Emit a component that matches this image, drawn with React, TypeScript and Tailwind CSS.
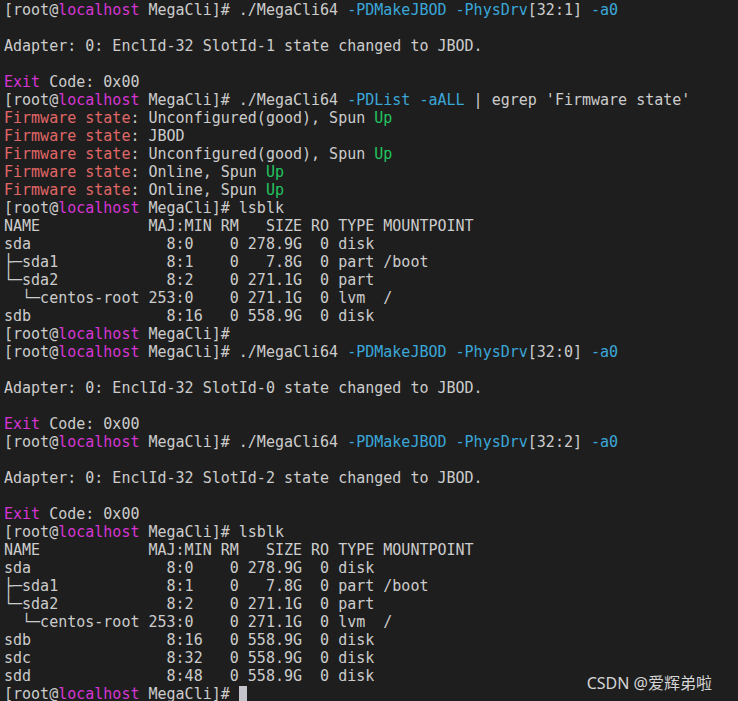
type Seg = [string, string?];

const G = 'text-[#cccccc]';
const PINK = 'text-[#d535d3]';
const BLUE = 'text-[#3ba7d9]';
const RED = 'text-[#e06767]';
const GREEN = 'text-[#23c45f]';

const prompt = (cmd: Seg[] = []): Seg[] => [
  ['[root@'],
  ['localhost', PINK],
  [' MegaCli]#'],
  ...(cmd.length ? ([[' ']] as Seg[]) : []),
  ...cmd,
];

const makeJbod = (slot: string): Seg[] =>
  prompt([
    ['./MegaCli64'],
    [' -PDMakeJBOD -PhysDrv', BLUE],
    [`[32:${slot}]`],
    [' -a0', BLUE],
  ]);

const exit: Seg[] = [['Exit', PINK], [' Code: 0x00']];
const fw = (rest: Seg[]): Seg[] => [['Firmware state', RED], [': '], ...rest];

const lines: Seg[][] = [
  makeJbod('1'),
  [],
  [['Adapter: 0: EnclId-32 SlotId-1 state changed to JBOD.']],
  [],
  exit,
  prompt([['./MegaCli64'], [' -PDList -aALL', BLUE], [" | egrep 'Firmware state'"]]),
  fw([['Unconfigured(good), Spun '], ['Up', GREEN]]),
  fw([['JBOD']]),
  fw([['Unconfigured(good), Spun '], ['Up', GREEN]]),
  fw([['Online, Spun '], ['Up', GREEN]]),
  fw([['Online, Spun '], ['Up', GREEN]]),
  prompt([['lsblk']]),
  [['NAME            MAJ:MIN RM   SIZE RO TYPE MOUNTPOINT']],
  [['sda               8:0    0 278.9G  0 disk']],
  [['├─sda1            8:1    0   7.8G  0 part /boot']],
  [['└─sda2            8:2    0 271.1G  0 part']],
  [['  └─centos-root 253:0    0 271.1G  0 lvm  /']],
  [['sdb               8:16   0 558.9G  0 disk']],
  prompt(),
  makeJbod('0'),
  [],
  [['Adapter: 0: EnclId-32 SlotId-0 state changed to JBOD.']],
  [],
  exit,
  makeJbod('2'),
  [],
  [['Adapter: 0: EnclId-32 SlotId-2 state changed to JBOD.']],
  [],
  exit,
  prompt([['lsblk']]),
  [['NAME            MAJ:MIN RM   SIZE RO TYPE MOUNTPOINT']],
  [['sda               8:0    0 278.9G  0 disk']],
  [['├─sda1            8:1    0   7.8G  0 part /boot']],
  [['└─sda2            8:2    0 271.1G  0 part']],
  [['  └─centos-root 253:0    0 271.1G  0 lvm  /']],
  [['sdb               8:16   0 558.9G  0 disk']],
  [['sdc               8:32   0 558.9G  0 disk']],
  [['sdd               8:48   0 558.9G  0 disk']],
];

export default function App() {
  return (
    <div className="relative w-[738px] h-[701px] overflow-hidden bg-[#1e1e1e] pl-[4px] pt-[1px] font-['DejaVu_Sans_Mono',monospace] text-[15px] leading-[18px]">
      {lines.map((line, i) => (
        <div key={i} className={`h-[18px] whitespace-pre ${G}`}>
          {line.map(([text, cls], j) => (
            <span key={j} className={cls ?? G}>
              {text}
            </span>
          ))}
        </div>
      ))}
      {/* last prompt with cursor */}
      <div className={`h-[18px] whitespace-pre flex items-center ${G}`}>
        <span>[root@</span>
        <span className={PINK}>localhost</span>
        <span> MegaCli]# </span>
        <span className="inline-block w-[8px] h-[17px] bg-[#c4c4cc]" />
      </div>

      {/* watermark */}
      <div className="absolute right-[26px] top-[672px] text-[16px] leading-[22px] text-[#d6d6d6] font-['Noto_Sans','Noto_Sans_CJK_SC',sans-serif]">
        CSDN @爱辉弟啦
      </div>
    </div>
  );
}
